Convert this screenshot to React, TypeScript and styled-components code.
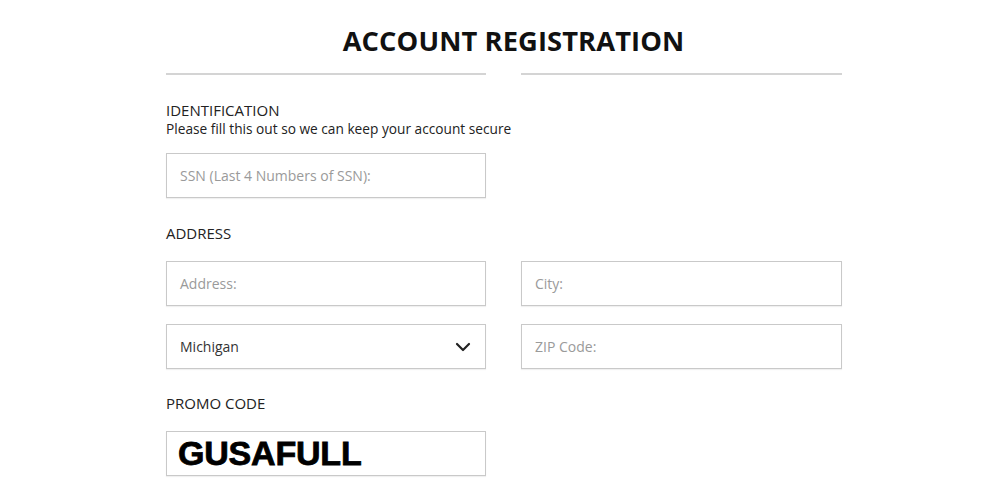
import React, { FunctionComponent } from 'react';
import styled, { createGlobalStyle } from 'styled-components';

const GlobalStyle = createGlobalStyle`
    html, body {
        margin: 0;
        padding: 0;
        background: #ffffff;
    }

    body {
        font-family: 'Open Sans', 'Liberation Sans', sans-serif;
        color: #222;
    }
`;

const Page = styled.div`
    width: 1000px;
    height: 500px;
    overflow: hidden;
    box-sizing: border-box;
    padding: 24px 0 0 166px;
`;

const Form = styled.div`
    width: 676px;
    display: flex;
    flex-direction: column;
`;

const Title = styled.h1`
    margin: 0 0 0 19px;
    font-size: 27.3px;
    font-weight: 700;
    line-height: 34px;
    color: #111;
    text-align: center;
    letter-spacing: 0.1px;
`;

const Dividers = styled.div`
    display: grid;
    grid-template-columns: 320px 321px;
    column-gap: 35px;
    margin-top: 15px;

    & span {
        display: block;
        height: 2px;
        background: #d4d4d4;
    }
`;

const SectionTitle = styled.div<{ $top: number }>`
    margin-top: ${(p) => p.$top}px;
    font-size: 15px;
    line-height: 20px;
    color: #222;
    text-transform: uppercase;
`;

const Hint = styled.div`
    font-size: 13.7px;
    line-height: 18px;
    color: #222;
`;

const Grid = styled.div<{ $top: number }>`
    display: grid;
    grid-template-columns: 320px 321px;
    column-gap: 35px;
    row-gap: 18px;
    margin-top: ${(p) => p.$top}px;
`;

const Field = styled.div`
    height: 45px;
    box-sizing: border-box;
    border: 1px solid #c9c9c9;
    box-shadow: 0 1px 1px rgba(0, 0, 0, 0.06);
    display: flex;
    align-items: center;
    justify-content: space-between;
    padding: 0 14px 0 13px;
    font-size: 14px;
    color: #9a9a9a;
`;

const Value = styled.span`
    color: #333;
`;

const Promo = styled(Field)`
    padding-left: 11px;
    font-family: 'Liberation Sans', Arial, sans-serif;
    font-weight: 700;
    font-size: 34px;
    letter-spacing: -0.2px;
    color: #000;
    -webkit-text-stroke: 0.8px #000;
`;

const Chevron: FunctionComponent = () => (
    <svg width="16" height="10" viewBox="0 0 16 10" fill="none">
        <path d="M2 2l6 6 6-6" stroke="#222" strokeWidth="2.2" strokeLinecap="round" strokeLinejoin="round" />
    </svg>
);

const App: FunctionComponent = () => (
    <Page>
        <GlobalStyle />
        <Form>
            <Title>ACCOUNT REGISTRATION</Title>
            <Dividers>
                <span />
                <span />
            </Dividers>

            <SectionTitle $top={25}>Identification</SectionTitle>
            <Hint>Please fill this out so we can keep your account secure</Hint>
            <Grid $top={15}>
                <Field>SSN (Last 4 Numbers of SSN):</Field>
            </Grid>

            <SectionTitle $top={25}>Address</SectionTitle>
            <Grid $top={18}>
                <Field>Address:</Field>
                <Field>City:</Field>
                <Field>
                    <Value>Michigan</Value>
                    <Chevron />
                </Field>
                <Field>ZIP Code:</Field>
            </Grid>

            <SectionTitle $top={24}>Promo code</SectionTitle>
            <Grid $top={18}>
                <Promo>GUSAFULL</Promo>
            </Grid>
        </Form>
    </Page>
);

export default App;
